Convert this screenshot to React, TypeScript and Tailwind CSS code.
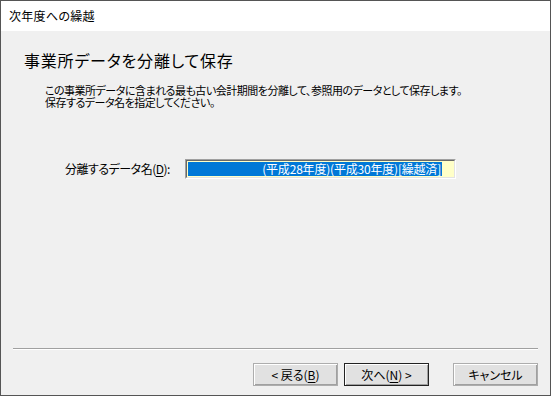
import React from "react";

const jp = "font-['Noto_Sans_CJK_JP','Noto_Sans',sans-serif] [font-feature-settings:'palt']";

function Btn({ children, def }: { children: React.ReactNode; def?: boolean }) {
  return (
    <div
      className={`w-[85px] h-[23px] flex items-center justify-center text-[12px] leading-[12px] text-black bg-[#e1e1e1] ${
        def ? "border border-[#222] shadow-[inset_1px_1px_0_#fff,inset_-1px_-1px_0_#a0a0a0]" : "border border-[#adadad] shadow-[inset_1px_1px_0_#fff,inset_-1px_-1px_0_#a0a0a0]"
      }`}
    >
      {children}
    </div>
  );
}

export default function App() {
  return (
    <div className={`w-[551px] h-[396px] border border-[#555] bg-[#f0f0f0] flex flex-col ${jp}`}>
      <div className="h-[30px] bg-white flex items-center pl-[8px] text-[12px] tracking-[0.3px] text-black">次年度への繰越</div>
      <div className="mt-[19px] pl-[23px] text-[16px] leading-[20px] tracking-[0.8px] text-black">事業所データを分離して保存</div>
      <div className="mt-[14px] pl-[44px] text-[11px] leading-[12px] text-black tracking-[-0.5px]">
        <div className="h-[12px]">この事業所データに含まれる最も古い会計期間を分離して、参照用のデータとして保存します。</div>
        <div className="h-[12px]">保存するデータ名を指定してください。</div>
      </div>
      <div className="mt-[51px] flex items-center h-[20px]">
        <div className="pl-[64px] w-[184px] text-[12px] leading-[12px] text-black tracking-[-0.5px]">
          分離するデータ名(<span className="underline underline-offset-2">D</span>):
        </div>
        <div className="w-[271px] h-[20px] border-t border-l border-[#a0a0a0] border-b-white border-r-white border-b border-r">
          <div className="w-full h-full border-t border-l border-[#696969] border-b border-r border-b-[#e3e3e3] border-r-[#e3e3e3] bg-[#ffffc8] pl-[1px] pt-[1px]">
            <div className="w-[254px] h-[14px] bg-[#0078d7] text-white text-[12px] leading-[14px] text-right pr-[1px] tracking-[-0.2px]">
              (平成28年度)(平成30年度)[繰越済]
            </div>
          </div>
        </div>
      </div>
      <div className="flex-1" />
      <div className="mx-[12px] h-[2px] border-t border-[#a0a0a0] bg-white" />
      <div className="mt-[13px] mb-[9px] flex justify-end pr-[12px]">
        <Btn>
          &lt; 戻る(<span className="underline underline-offset-2">B</span>)
        </Btn>
        <div className="w-[6px]" />
        <Btn def>
          次へ(<span className="underline underline-offset-2">N</span>) &gt;
        </Btn>
        <div className="w-[24px]" />
        <Btn>キャンセル</Btn>
      </div>
    </div>
  );
}
